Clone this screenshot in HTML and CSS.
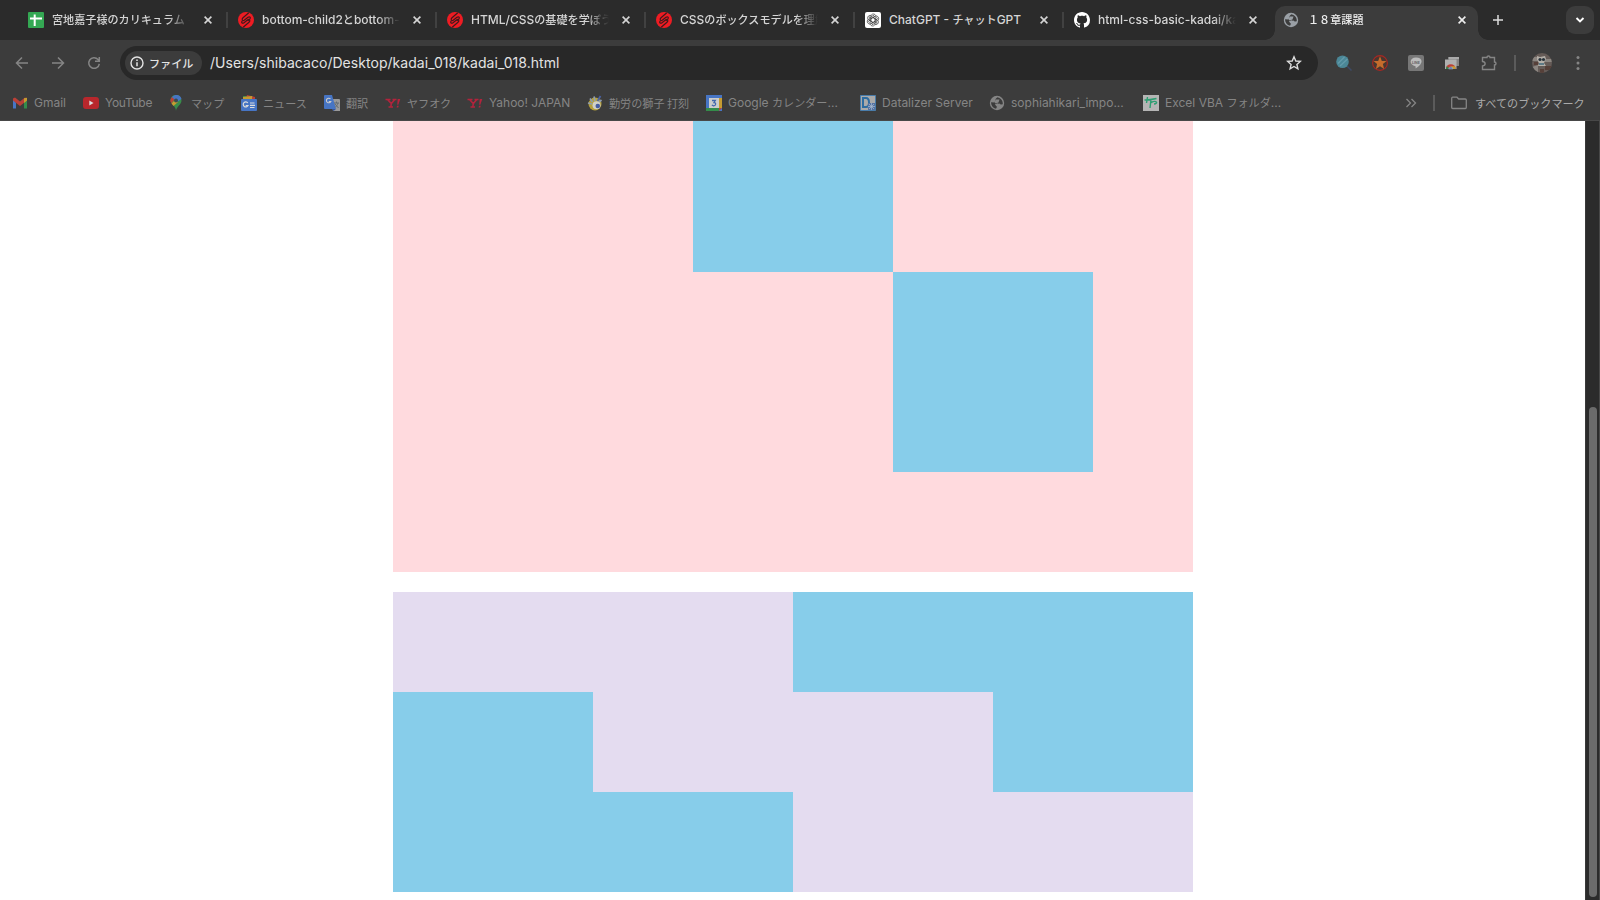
FILE: index.html
```html
<!DOCTYPE html>
<html lang="ja">
<head>
<meta charset="utf-8">
<title>１８章課題</title>
<link rel="stylesheet" href="styles.css">
</head>
<body>
<svg class="defs" width="0" height="0">
  <symbol id="close" viewBox="0 0 10 10"><path d="M1.6 1.6l6.8 6.8M8.4 1.6L1.6 8.4" stroke="currentColor" stroke-width="1.6"/></symbol>
  <symbol id="samurai" viewBox="0 0 16 16"><circle cx="8" cy="8" r="8" fill="#ee1c23"/><path d="M10.800.8L5 5.800C3.300 7.400 4.500 9.300 6.200 8.200L10 5.300C11.800 4 13.200 5.700 11.700 7.200L9.800 8.900M5.200 15.200L11 10.200C12.700 8.600 11.500 6.700 9.800 7.800L6 10.700C4.200 12 2.800 10.300 4.300 8.800" fill="none" stroke="#40191b" stroke-width="1.200"/></symbol>
  <symbol id="globe" viewBox="0 0 16 16"><circle cx="8" cy="8" r="7.200" fill="currentColor"/><path d="M8.500 2.200C5.500 4 7 5.500 5.500 7.500L2 7.200C2 10.500 4 13 7 13.700L8 11.700L5.800 9.500L8.500 8.300L10.500 9.800L13.800 9.300C14 5.800 12 3 8.500 2.200Z" fill="#3c3c3c"/><path d="M6.800 4.500H10.500L9.500 7.500L6.500 8.500L5.500 7M7 9.200L10.500 8.500L12 10L8.500 13" fill="currentColor"/></symbol>
  <symbol id="yahoo" viewBox="0 0 16 16"><path d="M.5 4.500H5.500M2.500 4.500L6.300 8.500L9.800 4.500M7.500 4.500H11.500M6.300 8.500L5.800 12M3.500 12H8" fill="none" stroke="#b3233c" stroke-width="1.600"/><path d="M12.700 4H15.300L13.300 9.800H12.200ZM12 10.800H13.700L13.300 12.600H11.600Z" fill="#b3233c"/></symbol>
</svg>
<header class="chrome">
  <div class="tabs">
    <div class="tab"><svg class="icon" viewBox="0 0 16 16"><rect width="16" height="16" rx="1" fill="#34a853"/><path d="M2 6.500H14M6.700 2.500V14" stroke="#fff" stroke-width="2"/></svg><span class="title"><span class="jp">宮地嘉子様のカリキュラム</span> -</span><svg class="close"><use href="#close"/></svg></div>
    <div class="tab"><svg class="icon"><use href="#samurai"/></svg><span class="title">bottom-child2<span class="jp">と</span>bottom-</span><svg class="close"><use href="#close"/></svg></div>
    <div class="tab"><svg class="icon"><use href="#samurai"/></svg><span class="title">HTML/CSS<span class="jp">の基礎を学ぼう</span></span><svg class="close"><use href="#close"/></svg></div>
    <div class="tab"><svg class="icon"><use href="#samurai"/></svg><span class="title">CSS<span class="jp">のボックスモデルを理解</span></span><svg class="close"><use href="#close"/></svg></div>
    <div class="tab"><svg class="icon" viewBox="0 0 16 16"><rect width="16" height="16" rx="2" fill="#fff"/><g fill="none" stroke="#333" stroke-width=".65"><path id="petal" d="M5.800 9V4.700C5.800 1.300 10.300 1 11 4.300M5.800 6.800L9.500 4.600L13 6.600"/><use href="#petal" transform="rotate(60 8 8)"/><use href="#petal" transform="rotate(120 8 8)"/><use href="#petal" transform="rotate(180 8 8)"/><use href="#petal" transform="rotate(240 8 8)"/><use href="#petal" transform="rotate(300 8 8)"/></g></svg><span class="title full">ChatGPT - <span class="jp">チャット</span>GPT</span><svg class="close"><use href="#close"/></svg></div>
    <div class="tab"><svg class="icon" viewBox="0 0 16 16"><path fill="#fff" d="M8 0C3.580 0 0 3.580 0 8c0 3.540 2.290 6.530 5.470 7.590.4.070.55-.17.55-.38 0-.19-.01-.82-.01-1.490-2.010.37-2.530-.49-2.690-.94-.09-.23-.48-.94-.82-1.130-.28-.15-.68-.52-.01-.53.63-.01 1.080.58 1.230.82.720 1.210 1.870.87 2.330.66.070-.52.280-.87.510-1.070-1.780-.2-3.640-.89-3.640-3.950 0-.87.310-1.590.82-2.150-.08-.2-.36-1.020.08-2.120 0 0 .67-.21 2.200.82.640-.18 1.320-.27 2-.27s1.360.09 2 .27c1.530-1.040 2.200-.82 2.200-.82.440 1.100.160 1.920.08 2.120.51.560.82 1.270.82 2.150 0 3.070-1.870 3.750-3.650 3.950.290.250.540.730.540 1.480 0 1.070-.01 1.930-.01 2.200 0 .21.150.46.550.38A8 8 0 0 0 16 8c0-4.420-3.580-8-8-8z"/></svg><span class="title">html-css-basic-kadai/ka</span><svg class="close"><use href="#close"/></svg></div>
    <div class="tab active"><svg class="icon"><use href="#globe"/></svg><span class="title"><span class="jp">１８章課題</span></span><svg class="close"><use href="#close"/></svg></div>
    <svg class="plus" viewBox="0 0 12 12"><path d="M6 1V11M1 6H11" stroke="#ddd" stroke-width="1.500"/></svg>
    <div class="tab-menu"><svg width="10" height="8" viewBox="0 0 10 8"><path d="M1.500 2L5 5.500L8.500 2" fill="none" stroke="#fff" stroke-width="1.900"/></svg></div>
  </div>
  <div class="toolbar">
    <svg class="nav" viewBox="0 0 16 16"><path d="M14 8H3M8 2.500L2.500 8L8 13.500"/></svg>
    <svg class="nav" viewBox="0 0 16 16"><path d="M2 8H13M8 2.500L13.500 8L8 13.500"/></svg>
    <svg class="nav" viewBox="0 0 16 16"><path d="M13.300 8.800A5.300 5.300 0 1 1 12 4.500L13 5.500M13.300 2V6.300H9"/></svg>
    <div class="omnibox">
      <div class="chip"><svg width="14" height="14" viewBox="0 0 14 14"><circle cx="7" cy="7" r="6" fill="none" stroke="#e3e3e3" stroke-width="1.400"/><path d="M7 6.300V10.300M7 3.500V5" stroke="#e3e3e3" stroke-width="1.500"/></svg><span class="file jp">ファイル</span></div>
      <span class="url">/Users/shibacaco/Desktop/kadai_018/kadai_018.html</span>
      <svg class="star" viewBox="0 0 16 16"><path d="M8 1.800L9.800 6L14.300 6.400L10.900 9.400L11.900 13.800L8 11.500L4.100 13.800L5.100 9.400L1.700 6.400L6.200 6Z" fill="none" stroke="#ddd" stroke-width="1.400"/></svg>
    </div>
    <div class="extensions">
      <svg viewBox="0 0 16 16"><path d="M11 11L15.500 15.500" stroke="#3d4a66" stroke-width="1.500"/><circle cx="6.500" cy="6.800" r="6.300" fill="#4b8797"/><path d="M2 8.500L8.500 2M4 11L11.500 4" stroke="#639bab" stroke-width="1.300"/></svg>
      <svg viewBox="0 0 16 16"><circle cx="8" cy="8" r="7.400" fill="#49372f" stroke="#aa2723" stroke-width="1.100"/><path d="M8 1.300L9.800 6L14.500 6.100L10.900 9L12.100 13.900L8 11.200L3.900 13.900L5.100 9L1.500 6.100L6.200 6Z" fill="#c56c2c"/></svg>
      <svg viewBox="0 0 16 16"><rect width="16" height="16" rx="2" fill="#777"/><path d="M8 2.500C1 2.500 1 10 7.500 11.200L7.700 13.500C16 8.500 15 2.500 8 2.500Z" fill="#bbb"/><text x="8" y="8.700" text-anchor="middle" class="line-text">LINE</text></svg>
      <svg viewBox="0 0 16 16"><path d="M4.500 2H15V11H4.500Z" fill="#858585"/><path d="M4.500 2H15V4H4.500Z" fill="#aaa"/><path d="M1 4.500H12.500V14H1Z" fill="#b0b0b0"/><path d="M2 14A4.800 4.800 0 0 1 11.600 14Z" fill="#bb4036"/><path d="M2 14L2.600 11.300L6.500 14Z" fill="#34834a"/><path d="M11.600 14L11 11.300H7.500L6.500 14Z" fill="#c59b31"/><path d="M4.700 14A2.100 2.100 0 0 1 8.900 14Z" fill="#4b73bc" stroke="#bbb" stroke-width=".5"/></svg>
      <svg class="puzzle" viewBox="0 0 16 16"><path d="M1.500 2.500H6C6 .5 9 .5 9 2.500H13.500V7C15.500 7 15.500 10 13.500 10V14.500H1.500V11C5 10.500 5 7 1.500 6.500Z" fill="none" stroke="#858585" stroke-width="1.400"/></svg>
    </div>
    <i class="divider"></i>
    <svg class="avatar" viewBox="0 0 20 20"><defs><clipPath id="round"><circle cx="10" cy="10" r="10"/></clipPath></defs><g clip-path="url(#round)"><path fill="#655b57" d="M0 0H20V20H0Z"/><path fill="#8b8580" d="M0 4H5V8H0ZM13 6H20V9H13ZM0 14L6 12V20H0Z"/><path fill="#564039" d="M2 9H6V12H2ZM13 13H20V17H13ZM8 16H12V20H8Z"/><path fill="#b4afa8" d="M5 3L8 4L13 3L14 6L12 10L14 13H6L7 10L5 7Z"/><circle cx="8" cy="6.500" r="1.600" fill="#29333b"/><circle cx="11.500" cy="6.500" r="1.600" fill="#29333b"/><path fill="#5f7b87" d="M7 10H12V12H7Z"/></g></svg>
    <svg class="more" viewBox="0 0 4 16"><circle cx="2" cy="2.500" r="1.500"/><circle cx="2" cy="8" r="1.500"/><circle cx="2" cy="13.500" r="1.500"/></svg>
  </div>
  <div class="bookmarks">
    <div class="bookmark"><svg class="icon" viewBox="0 0 16 16"><path d="M1 4V13.500H4V7.500Z" fill="#4775c4"/><path d="M15 4V13.500H12V7.500Z" fill="#348c4a"/><path d="M1 3.500L3 2.500L8 6.500L13 2.500L15 3.500V5.500L8 11L1 5.500Z" fill="#ba4037"/><path d="M12 3.300L15 2.800V5.500L12 8Z" fill="#c59b31"/></svg><span>Gmail</span></div>
    <div class="bookmark"><svg class="icon" viewBox="0 0 16 16"><rect y="2" width="16" height="12" rx="3" fill="#b8272c"/><path d="M6.300 5.500L10.500 8L6.300 10.500Z" fill="#ddd"/></svg><span class="youtube">YouTube</span></div>
    <div class="bookmark"><svg class="icon" viewBox="0 0 16 16"><path d="M7 16C7 11 1.500 9 1.500 5.500C1.500 2 4 0 7 0C10 0 12.500 2 12.500 5.500C12.500 10 7.500 11 7 16Z" fill="#388c4b"/><path d="M5 5L10.500.8A5.500 5.500 0 0 1 12.500 4L8 7Z" fill="#4775c4"/><path d="M3 2L6 4L2.300 8.300A5 5 0 0 1 3 2Z" fill="#ba4037"/><path d="M3 2A5.500 5.500 0 0 1 10.500 1L6 5Z" fill="#4775c4"/><path d="M2.500 8.500L5.500 5.500L9 7L4.500 11Z" fill="#c59b31"/><circle cx="7" cy="5.500" r="2" fill="#3b4b50"/></svg><span class="jp">マップ</span></div>
    <div class="bookmark"><svg class="icon" viewBox="0 0 16 16"><path d="M2 1H12V6H2Z" fill="#388c4b"/><path d="M6 0L14 2V7H4Z" fill="#ba4037"/><path d="M2 2L11 1V6H2Z" fill="#c59b31"/><rect y="4" width="16" height="12" rx="1" fill="#4775c4"/><path d="M6.800 8A2.500 2.500 0 1 0 7 10.500H4.700M9 8H13.500M9 10.300H14M9 12.500H13.500" fill="none" stroke="#ddd" stroke-width="1.200"/></svg><span class="jp">ニュース</span></div>
    <div class="bookmark"><svg class="icon" viewBox="0 0 16 16"><path d="M7 4H15Q16 4 16 5V16H9Z" fill="#999"/><path d="M1 0H8L12 14H1Q0 14 0 13V1Q0 0 1 0Z" fill="#4775c4"/><path d="M6.500 4A2.300 2.300 0 1 0 6.800 6.500H4.800" fill="none" stroke="#ccc" stroke-width="1.100"/><path d="M10 8H15M12.500 6.500V8M14 8C13.500 10 12 11.500 11 12.500M11 9L14.500 13" fill="none" stroke="#626b72" stroke-width="1"/><path d="M8 14H12L9.500 16Z" fill="#34539b"/></svg><span class="jp">翻訳</span></div>
    <div class="bookmark"><svg class="icon"><use href="#yahoo"/></svg><span class="jp">ヤフオク</span></div>
    <div class="bookmark"><svg class="icon"><use href="#yahoo"/></svg><span>Yahoo! JAPAN</span></div>
    <div class="bookmark"><svg class="icon" viewBox="0 0 16 16"><circle cx="8" cy="9" r="6.500" fill="#b6a13c"/><path d="M3 3.500L5.500 7M7 1.500L8 6M14.500 5L11 8M1 8L5 9" stroke="#8f9daf" stroke-width="1.700"/><path d="M13.500 1L10.500 6" stroke="#4b63a4" stroke-width="1.700"/><circle cx="9.500" cy="10.300" r="4" fill="#d0d0c8"/><circle cx="10.800" cy="11" r="2.300" fill="#465da0"/></svg><span class="jp">勤労の獅子 打刻</span></div>
    <div class="bookmark"><svg class="icon" viewBox="0 0 16 16"><path d="M0 0H16V16H0Z" fill="#4775c4"/><path d="M13 3H16V13H13Z" fill="#c59b31"/><path d="M0 13H13V16H0Z" fill="#348c4a"/><path d="M13 13H16L13 16Z" fill="#ba4037"/><path d="M3 3H13V13H3Z" fill="#ccc"/><path d="M6 5.500H9.300L8 7.500C10.500 7.500 10 11 7.500 10.800L5.800 10" fill="none" stroke="#4267ac" stroke-width="1.300"/></svg><span>Google <span class="jp">カレンダー</span>...</span></div>
    <div class="bookmark"><svg class="icon" viewBox="0 0 16 16"><path d="M.5.500H15.500V15.500H.5Z" fill="#aaa" stroke="#497caa"/><path d="M3 3H6C10 3 10 12 6 12H3Z" fill="none" stroke="#2d6ca1" stroke-width="2"/><path d="M8 8H15V15H8Z" fill="#5572a2"/><path d="M9 9L14 14M14 9L9 14M11.500 8V15M8 11.500H15" stroke="#aabbd0" stroke-width=".7"/></svg><span>Datalizer Server</span></div>
    <div class="bookmark"><svg class="icon"><use href="#globe"/></svg><span>sophiahikari_impo...</span></div>
    <div class="bookmark"><svg class="icon" viewBox="0 0 16 16"><path d="M0 0H16V16H0Z" fill="#b5b5b5"/><path d="M1.500 5Q7 5 13.500 3.500M4.500 2L3.500 8M8 4.500L7 13M8 7.500C14 4.500 15.500 9 11 9" fill="none" stroke="#2d9f72" stroke-width="1.400"/></svg><span>Excel VBA <span class="jp">フォルダ</span>...</span></div>
    <svg class="overflow" viewBox="0 0 12 10"><path d="M1.500 1L5.500 5L1.500 9M6.500 1L10.500 5L6.500 9" fill="none" stroke="#858585" stroke-width="1.300"/></svg>
    <i class="divider"></i>
    <svg class="folder" viewBox="0 0 16 14"><path d="M.7 2.200Q.7 1.200 1.700 1.200H6L7.700 3H14.300Q15.300 3 15.300 4V11.500Q15.300 12.500 14.300 12.500H1.700Q.7 12.500.7 11.500Z" fill="none" stroke="#858585" stroke-width="1.300"/></svg>
    <span class="all jp">すべてのブックマーク</span>
  </div>
</header>
<main class="viewport">
  <div class="page">
    <section class="top"><i></i><i></i></section>
    <section class="bottom"><i></i><i></i><i></i><i></i></section>
  </div>
  <div class="scrollbar"><div class="thumb"></div></div>
</main>
</body>
</html>
```
FILE: styles.css
```css
* { box-sizing: border-box; }
body { margin: 0; width: 1600px; height: 900px; overflow: hidden; display: flex; flex-direction: column; background: #fff; font: 12px Inter, "Noto Sans CJK JP", sans-serif; }
svg { display: block; flex: none; }
.defs { position: absolute; }
.jp { font-family: "Noto Sans CJK JP", sans-serif; font-size: 11.1px; line-height: 16px; }
.chrome { height: 121px; background: #3c3c3c; border-bottom: 1px solid #484848; }
.tabs { height: 40px; display: flex; padding-left: 18px; background: #2b2b2b; color: #d5d5d5; }
.tab { position: relative; width: 209px; height: 40px; flex: none; display: flex; align-items: center; padding-left: 11px; font-weight: 500; }
.tab:first-child { padding-left: 10px; }
.tab:first-child .close { margin-left: 13px; }
.tab:nth-child(-n+5)::after { content: ""; position: absolute; right: -1px; top: 12px; width: 2px; height: 16px; background: #414141; }
.tab.active { width: 203px; height: 34px; margin: 6px 0 0 3px; padding: 0 0 6px 8px; background: #3c3c3c; border-radius: 10px 10px 0 0; color: #eee; }
.tab.active .icon { color: #9aa0a6; }
.tab.active::before, .tab.active::after { content: ""; position: absolute; bottom: 0; width: 10px; height: 10px; }
.tab.active::before { left: -10px; background: radial-gradient(circle at 0 0, #2b2b2b 9.500px, #3c3c3c 10px); }
.tab.active::after { right: -10px; background: radial-gradient(circle at 100% 0, #2b2b2b 9.500px, #3c3c3c 10px); }
.icon { width: 16px; height: 16px; }
.title { width: 138px; flex: none; margin-left: 8px; overflow: hidden; white-space: nowrap; line-height: 20px; mask-image: linear-gradient(90deg, #000 84%, transparent); }
.title.full { mask-image: none; }
.active .title { width: 138px; margin-left: 9px; }
.close { width: 10px; height: 10px; margin-left: 12px; }
.tab.active .close { margin-left: 11px; }
.plus { width: 12px; height: 12px; margin: 14px 0 0 14px; }
.tab-menu { width: 28px; height: 28px; margin: 6px 0 0 62px; border-radius: 9px; background: #3c3c3c; display: grid; place-items: center; }
.toolbar { height: 46px; display: flex; align-items: center; padding-left: 14px; }
.nav { width: 16px; height: 16px; margin-right: 20px; fill: none; stroke: #858585; stroke-width: 1.500; }
.nav:nth-child(3) { margin-right: 18px; }
.omnibox { width: 1198px; height: 34px; border-radius: 17px; background: #282828; display: flex; align-items: center; padding: 0 16px 0 5px; }
.chip { width: 77px; height: 24px; border-radius: 12px; background: #3c3c3c; display: flex; align-items: center; padding-left: 5px; color: #e3e3e3; font-weight: 500; white-space: nowrap; }
.file { margin-left: 5px; }
.url { flex: 1; margin-left: 8px; color: #e3e3e3; font-size: 14px; line-height: 20px; letter-spacing: .04px; }
.star { width: 16px; height: 16px; }
.extensions { display: flex; gap: 20px; margin-left: 18px; }
.extensions svg { width: 16px; height: 16px; }
.extensions .puzzle { margin: 0 -1px 0 1px; }
.line-text { font: 700 3.500px Inter, sans-serif; fill: #666; }
.divider { width: 2px; height: 16px; background: #5b5b5b; flex: none; }
.toolbar .divider { margin-left: 18px; }
.avatar { width: 20px; height: 20px; margin-left: 16px; }
.more { width: 4px; height: 16px; margin-left: 24px; fill: #858585; }
.bookmarks { height: 34px; display: grid; grid-template-columns: 71px 86px 72px 83px 61px 82px 120px 119px 154px 129px 154px 262px 28px 18px 24px auto; align-items: center; padding-left: 12px; color: #858585; }
.bookmark { display: flex; align-items: center; gap: 6px; white-space: nowrap; line-height: 18px; }
.youtube { letter-spacing: -.3px; }
.overflow { width: 12px; height: 10px; }
.folder { width: 16px; height: 14px; }
.all { color: #aaa; white-space: nowrap; }
.viewport { height: 779px; display: flex; }
.page { width: 1585px; padding-left: 393px; }
.top, .bottom { width: 800px; display: grid; }
.top { height: 451px; margin-bottom: 20px; background: #ffdade; grid-template: 151px 200px / 300px 200px 200px; }
.top i, .bottom i { background: #87cdea; }
.top i:first-child { grid-area: 1 / 2; }
.top i:last-child { grid-area: 2 / 3; }
.bottom { height: 300px; background: #e4dcf0; grid-template: repeat(3, 100px) / repeat(4, 200px); }
.bottom i:nth-child(1) { grid-area: 1 / 3 / 2 / 5; }
.bottom i:nth-child(2) { grid-area: 2 / 4; }
.bottom i:nth-child(3) { grid-area: 2 / 1; }
.bottom i:nth-child(4) { grid-area: 3 / 1 / 4 / 3; }
.scrollbar { width: 15px; background: #2b2b2b; border-left: 1px solid #393939; border-right: 1px solid #484848; padding: 286px 2px 3px 3px; }
.thumb { width: 8px; height: 490px; border-radius: 4px; background: #6b6b6b; }
```
